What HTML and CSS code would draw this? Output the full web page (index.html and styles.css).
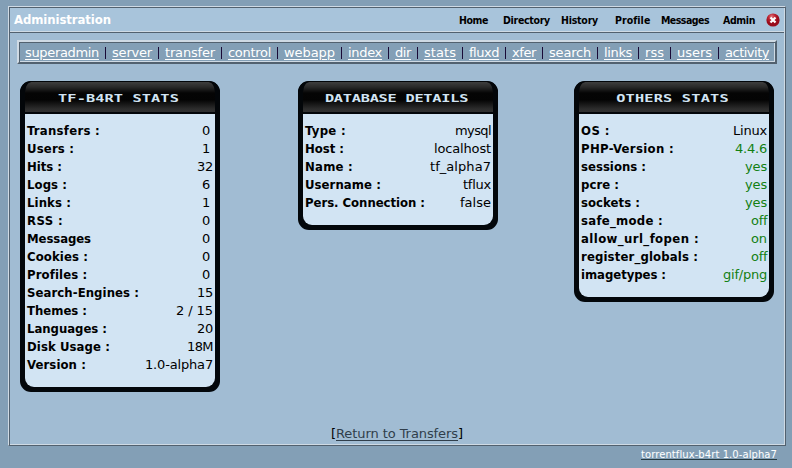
FILE: index.html
```html
<!DOCTYPE html>
<html lang="en">
<head>
<meta charset="utf-8">
<title>Administration</title>
<link rel="stylesheet" href="styles.css">
</head>
<body>
<main class="frame">
  <header class="top">
    <h1 data-w="97">Administration</h1>
    <nav class="menu">
      <a data-w="29">Home</a><a data-w="47">Directory</a><a data-w="37">History</a><a data-w="35">Profile</a><a data-w="48">Messages</a><a data-w="32">Admin</a>
      <svg class="close" viewBox="0 0 14 14"><defs><radialGradient id="red" cx=".4" cy=".25"><stop offset="0" stop-color="#e5787f"/><stop offset=".5" stop-color="#bd2634"/><stop offset="1" stop-color="#990b1b"/></radialGradient></defs><circle cx="7" cy="7" r="6.6" fill="url(#red)"/><path d="M4.500 4.500l5 5M9.500 4.500l-5 5" stroke="#fff" stroke-width="2.200"/></svg>
    </nav>
  </header>
  <nav class="tabs">
    <a data-w="74">superadmin</a><i></i><a data-w="40">server</a><i></i><a data-w="50">transfer</a><i></i><a data-w="43">control</a><i></i><a data-w="51">webapp</a><i></i><a data-w="34">index</a><i></i><a data-w="16">dir</a><i></i><a data-w="32">stats</a><i></i><a data-w="30">fluxd</a><i></i><a data-w="24">xfer</a><i></i><a data-w="42">search</a><i></i><a data-w="28">links</a><i></i><a data-w="19">rss</a><i></i><a data-w="35">users</a><i></i><a data-w="44">activity</a>
  </nav>
  <div class="cards">
    <section class="card">
      <h2><span data-w="87">TF-B4RT STATS</span></h2>
      <dl>
        <div><dt data-w="73">Transfers :</dt><dd class="pad" data-w="8">0</dd></div>
        <div><dt data-w="47">Users :</dt><dd class="pad" data-w="8">1</dd></div>
        <div><dt data-w="35">Hits :</dt><dd data-w="16">32</dd></div>
        <div><dt data-w="40">Logs :</dt><dd class="pad" data-w="8">6</dd></div>
        <div><dt data-w="44">Links :</dt><dd class="pad" data-w="8">1</dd></div>
        <div><dt data-w="36">RSS :</dt><dd class="pad" data-w="8">0</dd></div>
        <div><dt data-w="64">Messages</dt><dd class="pad" data-w="8">0</dd></div>
        <div><dt data-w="61">Cookies :</dt><dd class="pad" data-w="8">0</dd></div>
        <div><dt data-w="60">Profiles :</dt><dd class="pad" data-w="8">0</dd></div>
        <div><dt data-w="112">Search-Engines :</dt><dd data-w="16">15</dd></div>
        <div><dt data-w="60">Themes :</dt><dd data-w="37">2 / 15</dd></div>
        <div><dt data-w="80">Languages :</dt><dd data-w="16">20</dd></div>
        <div><dt data-w="83">Disk Usage :</dt><dd data-w="26">18M</dd></div>
        <div><dt data-w="59">Version :</dt><dd data-w="68">1.0-alpha7</dd></div>
      </dl>
    </section>
    <section class="card">
      <h2><span data-w="103">DATABASE DETAILS</span></h2>
      <dl>
        <div><dt data-w="41">Type :</dt><dd data-w="36">mysql</dd></div>
        <div><dt data-w="39">Host :</dt><dd data-w="57">localhost</dd></div>
        <div><dt data-w="48">Name :</dt><dd data-w="61">tf_alpha7</dd></div>
        <div><dt data-w="76">Username :</dt><dd data-w="28">tflux</dd></div>
        <div><dt data-w="120">Pers. Connection :</dt><dd data-w="31">false</dd></div>
      </dl>
    </section>
    <section class="card">
      <h2><span data-w="81">OTHERS STATS</span></h2>
      <dl>
        <div><dt data-w="29">OS :</dt><dd data-w="34">Linux</dd></div>
        <div><dt data-w="93">PHP-Version :</dt><dd class="ok" data-w="32">4.4.6</dd></div>
        <div><dt data-w="65">sessions :</dt><dd class="ok" data-w="22">yes</dd></div>
        <div><dt data-w="38">pcre :</dt><dd class="ok" data-w="22">yes</dd></div>
        <div><dt data-w="59">sockets :</dt><dd class="ok" data-w="22">yes</dd></div>
        <div><dt data-w="82">safe_mode :</dt><dd class="ok" data-w="16">off</dd></div>
        <div><dt data-w="118">allow_url_fopen :</dt><dd class="ok" data-w="16">on</dd></div>
        <div><dt data-w="117">register_globals :</dt><dd class="ok" data-w="16">off</dd></div>
        <div><dt data-w="85">imagetypes :</dt><dd class="ok" data-w="44">gif/png</dd></div>
      </dl>
    </section>
  </div>
  <p class="return"><span>[</span><a data-w="122">Return to Transfers</a><span>]</span></p>
</main>
<footer><a data-w="136">torrentflux-b4rt 1.0-alpha7</a></footer>
<script src="fit.js"></script>
</body>
</html>
```
FILE: styles.css
```css
* { box-sizing: border-box; margin: 0; padding: 0; }
html { height: 468px; overflow: hidden; }
body {
  width: 792px; height: 468px; padding: 6px 6px 0 8px;
  background: #839fb6;
  font: 13px/18px "DejaVu Sans", sans-serif;
  color: #000;
}
.frame {
  display: flex; flex-direction: column;
  width: 778px; height: 440px;
  border: 1px solid; border-color: #cfdae4 #52616f #52616f #cfdae4;
  box-shadow: inset 1px 1px #52616f, inset -1px -1px #cfdae4;
  background: #a1bcd3;
}
.top {
  display: flex; justify-content: space-between; align-items: center;
  height: 25px; margin: 1px 1px 0; padding: 0 4px;
  background: #a8c4db;
  border-bottom: 1px solid #52616f;
  box-shadow: inset 0 -1px #cfdae4;
}
h1 { font: bold 13px/18px "DejaVu Sans Condensed", "DejaVu Sans", sans-serif; color: #fff; white-space: nowrap; }
.menu { display: flex; align-items: center; font: bold 10.5px/14px "DejaVu Sans Condensed", "DejaVu Sans", sans-serif; }
.menu a { white-space: nowrap; }
.menu a + a { margin-left: 12px; }
.menu a:nth-child(2) { margin-left: 15px; }
.menu a:nth-child(3) { margin-left: 11px; }
.menu a:nth-child(4) { margin-left: 17px; }
.menu a:nth-child(5) { margin-left: 11px; }
.menu a:nth-child(6) { margin-left: 14px; }
.close { width: 14px; height: 14px; margin-left: 11px; margin-bottom: 1px; }
.tabs {
  display: flex; justify-content: flex-start; align-items: center;
  height: 24px; margin: 7px 8px 0; padding: 2px 0 0 6px;
  background: #839fb6;
  border: 2px solid; border-color: #cfdae4 #52616f #52616f #cfdae4;
  box-shadow: inset 1px 1px #52616f, inset -1px -1px #cfdae4;
}
.tabs a { color: #fff; text-decoration: underline; text-underline-offset: 2px; white-space: nowrap; }
.tabs i { flex: none; width: 1px; height: 12px; margin: 0 6px; background: #190a37; }
.cards { display: flex; align-items: flex-start; height: 311px; margin: 17px 11px 0; }
.card { width: 200px; border-radius: 11px; background: #03070b; padding: 0 5px 5px; overflow: hidden; }
.card:nth-child(2) { margin: 0 76px 0 78px; }
h2 {
  display: flex; align-items: center; justify-content: center;
  height: 33px; margin: 0 -5px;
  border: solid #030609; border-width: 1px 5px 2px;
  border-radius: 11px 11px 0 0;
  background: linear-gradient(#3e3e3e, #292929 5px, #050505 11px, #040404 18px, #2d2d2d 27px, #303030) padding-box;
  font: bold 11px/14px "DejaVu Sans Mono", monospace;
  color: #d2e4f3;
}
h2 span { transform: translate(-2px, 2px) scaleX(1.39); white-space: nowrap; }
dl { padding: 8px 2px 13px; background: #d2e4f3; border-radius: 0 0 9px 9px; }
dl div { display: flex; justify-content: space-between; height: 18px; }
dt { font: bold 13px/18px "DejaVu Sans Condensed", "DejaVu Sans", sans-serif; white-space: nowrap; }
dd { white-space: nowrap; font-size: 13px; }
.pad { margin-right: 3px; }
.ok { color: #128012; }
.return { display: flex; justify-content: center; margin-top: 33px; }
.return a { color: #303e4b; text-decoration: underline; text-underline-offset: 2px; white-space: nowrap; }
footer { display: flex; justify-content: flex-end; padding-right: 9px; height: 20px; }
footer a { height: 14px; font-size: 10px; line-height: 17px; color: #fff; border-bottom: 1px solid #263b43; white-space: nowrap; }
```
FILE: fit.js
```js
for (const el of document.querySelectorAll('[data-w]')) {
  const range = document.createRange();
  range.selectNodeContents(el);
  const scale = el.parentNode.tagName === 'H2' ? 1.39 : 1;
  const natural = range.getBoundingClientRect().width / scale;
  const target = Number(el.dataset.w);
  el.style.letterSpacing = (target - natural) / el.textContent.length + 'px';
  el.style.width = target + 'px';
}
```
